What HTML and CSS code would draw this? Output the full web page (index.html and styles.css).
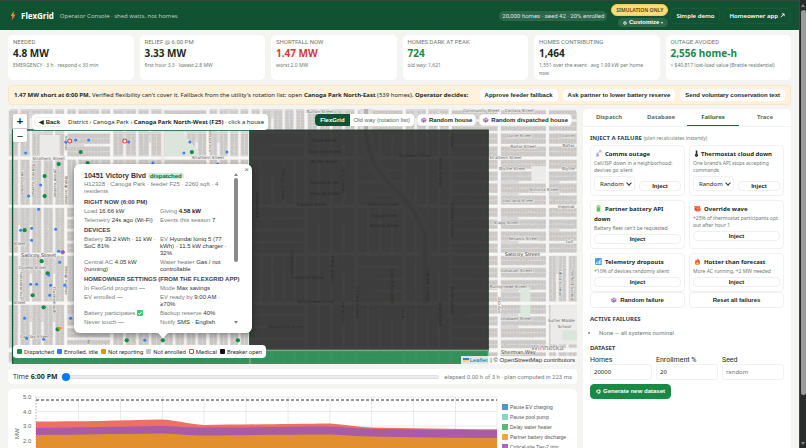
FILE: index.html
```html
<!DOCTYPE html>
<html lang="en">
<head>
<meta charset="utf-8">
<meta name="viewport" content="width=device-width, initial-scale=1">
<title>FlexGrid – Operator Console</title>
<link rel="stylesheet" href="styles.css">
</head>
<body>
<svg class="sprite" aria-hidden="true">
  <symbol id="i-die" viewBox="0 0 12 12"><path d="M6 .8 11 3.3v5.4L6 11.3 1 8.7V3.3z" fill="#b79ac8"/><path d="M1 3.3 6 5.8v5.5L1 8.7z" fill="#8e6ba6"/><path d="M6 .8 11 3.3 6 5.8 1 3.3z" fill="#d9c8e2"/><circle cx="6" cy="3.2" r="1" fill="#553a6c"/><circle cx="3" cy="7" r=".9" fill="#fff"/><circle cx="8.500" cy="7.300" r="1" fill="#553a6c"/></symbol>
  <symbol id="i-ext" viewBox="0 0 10 10"><path d="M1.500 8.500 8 2M3.500 1.700H8.300V6.500" fill="none" stroke="currentColor" stroke-width="1.700"/></symbol>
</svg>
<div class="shell">
<div class="page">
  <header class="top">
    <svg class="bolt" viewBox="0 0 10 16" aria-hidden="true"><path d="M6.500 0 1 8.500h3.200L2.800 16 9.300 6.500H5.800z" fill="#f7a531"/><path d="M4.200 8.500 2.800 16 9.300 6.500z" fill="#f0643c"/></svg>
    <h1>FlexGrid</h1>
    <span class="tagline">Operator Console · shed watts, not homes</span>
    <span class="pill">20,000 homes · seed 42 · 20% enrolled</span>
    <div class="stack">
      <span class="sim">SIMULATION ONLY</span>
      <button class="custom"><svg viewBox="0 0 10 10"><circle cx="5" cy="5" r="3" fill="none" stroke="currentColor" stroke-width="2"/><circle cx="5" cy="5" r="4.300" fill="none" stroke="currentColor" stroke-width="1.200" stroke-dasharray="1.700 1.700"/></svg> Customize <i class="caret"></i></button>
    </div>
    <a class="nav" href="#demo">Simple demo</a>
    <a class="nav" href="#home">Homeowner app <svg class="ext"><use href="#i-ext"/></svg></a>
  </header>

  <main class="content">
    <section class="kpis">
      <div class="kpi"><h2>NEEDED</h2><b>4.8 MW</b><p>EMERGENCY · 3 h · respond ≤ 30 min</p></div>
      <div class="kpi"><h2>RELIEF @ 6:00 PM</h2><b>3.33 MW</b><p>first hour 3.3 · lowest 2.8 MW</p></div>
      <div class="kpi"><h2>SHORTFALL NOW</h2><b class="bad">1.47 MW</b><p>worst 2.0 MW</p></div>
      <div class="kpi"><h2>HOMES DARK AT PEAK</h2><b class="good">724</b><p>old way: 1,621</p></div>
      <div class="kpi"><h2>HOMES CONTRIBUTING</h2><b>1,464</b><p>1,551 over the event · avg 1.99 kW per home<br>now</p></div>
      <div class="kpi"><h2>OUTAGE AVOIDED</h2><b class="good">2,556 home-h</b><p>≈ $40,817 lost-load value (Brattle residential)</p></div>
    </section>

    <section class="alert">
      <p><b>1.47 MW short at 6:00 PM.</b> Verified flexibility can't cover it. Fallback from the utility's rotation list: open <b>Canoga Park North-East</b> (539 homes). <b>Operator decides:</b></p>
      <button>Approve feeder fallback</button>
      <button>Ask partner to lower battery reserve</button>
      <button>Send voluntary conservation text</button>
    </section>

    <div class="columns">
      <div class="left">
        <section class="map">
          <svg id="tiles" class="tiles" viewBox="8 109 569 255" preserveAspectRatio="xMidYMid slice" role="img" aria-label="Feeder map"></svg>
          <div class="zoomer"><button>+</button><button>−</button></div>
          <div class="crumbs"><button>◀ Back</button><span>District › Canoga Park › <b>Canoga Park North-West (F25)</b> · click a house</span></div>
          <div class="modes">
            <div class="seg"><button class="on">FlexGrid</button><button>Old way (rotation list)</button></div>
            <button class="rand"><svg><use href="#i-die"/></svg>Random house</button>
            <button class="rand"><svg><use href="#i-die"/></svg>Random dispatched house</button>
          </div>
          <div class="key">
            <span><i class="k1"></i>Dispatched</span><span><i class="k2"></i>Enrolled, idle</span><span><i class="k3"></i>Not reporting</span><span><i class="k4"></i>Not enrolled</span><span><i class="k5"></i>Medical</span><span><i class="k6"></i>Breaker open</span>
          </div>
          <div class="attrib"><i class="flag"></i><a href="#leaflet">Leaflet</a> | © OpenStreetMap contributors</div>
          <article class="popup">
            <button class="close" aria-label="Close">×</button>
            <div class="info">
              <h3>10451 Victory Blvd <span class="tag">dispatched</span></h3>
              <p class="meta">H12328 · Canoga Park · feeder F25 · 2260 sqft · 4 residents</p>
              <h4>RIGHT NOW (6:00 PM)</h4>
              <div class="facts"><p>Load <em>16.66 kW</em></p><p>Giving <b>4.58 kW</b></p><p>Telemetry <em>24s ago (Wi-Fi)</em></p><p>Events this season <em>7</em></p></div>
              <h4>DEVICES</h4>
              <div class="facts"><p>Battery <em>39.2 kWh · 11 kW · SoC 81%</em></p><p>EV <em>Hyundai Ioniq 5 (77 kWh) · 11.5 kW charger · 32%</em></p><p>Central AC <em>4.05 kW (running)</em></p><p>Water heater <em>Gas / not controllable</em></p></div>
              <h4>HOMEOWNER SETTINGS (FROM THE FLEXGRID APP)</h4>
              <div class="facts"><p>In FlexGrid program <em>—</em></p><p>Mode <em>Max savings</em></p><p>EV enrolled <em>—</em></p><p>EV ready by <em>9:00 AM · ≥70%</em></p><p>Battery participates <svg class="tick" viewBox="0 0 10 10"><rect width="10" height="10" rx="1.500" fill="#3fc46b"/><path d="M2 5.300 4.200 7.500 8 2.700" fill="none" stroke="#fff" stroke-width="1.600"/></svg></p><p>Backup reserve <em>40%</em></p><p>Never touch <em>—</em></p><p>Notify <em>SMS · English</em></p></div>
            </div>
            <div class="rail"><i class="up"></i><i class="thumb"></i><i class="down"></i></div>
          </article>
        </section>

        <section class="time">
          <label for="t">Time <b>6:00 PM</b></label>
          <input id="t" type="range" min="0" max="180" value="0">
          <span>elapsed 0.00 h of 3 h · plan computed in 223 ms</span>
        </section>

        <section class="chart">
          <svg viewBox="8 389 490 100" role="img" aria-label="Relief by source in megawatts">
            <g stroke="#e4e4e4" stroke-width=".8"><path d="M36 397H497M36 411.500H497M36 426H497M36 441H497M78.500 397V489M120.500 397V489M162.500 397V489M204 397V489M246 397V489M288 397V489M330 397V489M371.500 397V489M413.500 397V489M455.500 397V489M497 397V489"/></g>
            <path d="M36 397V489" stroke="#999" stroke-dasharray="1.500 1.500" stroke-width=".8"/>
            <path d="M36 421.500C80 421.500 120 420.500 162 419.500C175 420 188 424 204 425C240 424.500 290 424 330 423.500C345 424.500 358 427 371 427.500C410 428 450 429 497 429.300V489H36z" fill="#ec7063"/>
            <path d="M36 428C80 427.500 120 426.500 162 426C178 426.500 190 427.500 204 427.500C250 427.500 290 426.500 330 426.500C345 427 358 429 371 428.800C410 429.500 450 430 497 430.300V489H36z" fill="#a95ba6"/>
            <path d="M36 435C80 434.500 120 434 162 433.500C178 434 190 435.500 204 435.500C250 435 290 434.500 330 434.500C345 435 358 436.500 371 436.500C410 437 450 438 497 438V489H36z" fill="#e2902f"/>
            <path d="M36 400H497" stroke="#333" stroke-width="1.200" stroke-dasharray="3 2"/>
            <g class="axis"><text x="23" y="399">5.0</text><text x="23" y="414">4.0</text><text x="23" y="428">3.0</text><text x="23" y="443">2.0</text><text transform="translate(18.500 439) rotate(-90)">MW</text></g>
          </svg>
          <ul>
            <li><i class="c1"></i>Pause EV charging</li><li><i class="c2"></i>Pause pool pump</li><li><i class="c3"></i>Delay water heater</li><li><i class="c4"></i>Partner battery discharge</li><li><i class="c5"></i>Critical-site Tier-2 trim</li>
          </ul>
        </section>
      </div>

      <aside class="panel">
        <nav class="tabs"><button>Dispatch</button><button>Database</button><button class="on">Failures</button><button>Trace</button></nav>
        <div class="body">
          <h2>INJECT A FAILURE <small>(plan recalculates instantly)</small></h2>
          <div class="grid">
            <div class="fail"><h3><svg viewBox="0 0 14 14"><path d="M1 13 5 6l3 7z" fill="#d8a6b8"/><path d="M3 8a4.500 4.500 0 0 0 6 3.500L4 4z" fill="#9aa7e0"/><path d="M6 7 11 1.500M8 1.500h4V5" fill="none" stroke="#7b90dd" stroke-width="1.400"/></svg>Comms outage</h3><p>Cell/ISP down in a neighborhood: devices go silent</p>
              <div class="act"><span class="sel"><select aria-label="Neighborhood"><option>Random</option></select></span><button>Inject</button></div></div>
            <div class="fail"><h3><svg class="slim" viewBox="0 0 8 14"><path d="M2.500 1h3v7a3 3 0 1 1-3 0z" fill="#222"/><circle cx="4" cy="10.500" r="1.500" fill="#666"/></svg>Thermostat cloud down</h3><p>One brand's API stops accepting commands</p>
              <div class="act"><span class="sel"><select aria-label="Brand"><option>Random</option></select></span><button>Inject</button></div></div>
            <div class="fail"><h3><svg viewBox="0 0 14 14"><rect x="5" y="0" width="4" height="2" fill="#9ab59c"/><rect x="3" y="1.500" width="8" height="12" rx="1.200" fill="#a9dd9a"/><rect x="4" y="5" width="6" height="7.500" fill="#5cc45a"/></svg>Partner battery API down</h3><p>Battery fleet can't be requested</p><button>Inject</button></div>
            <div class="fail"><h3><svg viewBox="0 0 14 14"><path d="M1 2h4l2 1 5-1v3l1 1v5l-3 2H5L1 10z" fill="#e6483a"/><path d="M2 3.500h3v1.800H2zM7 3.500h4v1.500H7zM5 6.500h6v2H5zM6 10h4v1.500H6z" fill="#f9a94a"/></svg>Override wave</h3><p>+25% of thermostat participants opt out after hour 1</p><button>Inject</button></div>
            <div class="fail"><h3><svg viewBox="0 0 14 14"><rect width="14" height="14" rx="2" fill="#4e9fe8"/><path d="M2 9h2v3H2zM5 7h2v5H5zM8 5h2v7H8zM11 2.500h1.600V12H11z" fill="#dff0ff"/></svg>Telemetry dropouts</h3><p>+10% of devices randomly silent</p><button>Inject</button></div>
            <div class="fail"><h3><svg viewBox="0 0 14 14"><path d="M7 0c1 3 5 4 5 8.500A5 5 0 0 1 7 14a5 5 0 0 1-5-5.500C2 6 3.500 5 4 3c1 .6 1.500 1.500 1.700 2.300C6.800 4 7.200 2 7 0z" fill="#ee5a2e"/><path d="M7 6.500c.6 2 2.600 2.500 2.600 4.500A2.600 2.600 0 0 1 7 13.500 2.600 2.600 0 0 1 4.400 11C4.400 9.500 6.500 8.500 7 6.500z" fill="#fcc640"/></svg>Hotter than forecast</h3><p>More AC running, +2 MW needed</p><button>Inject</button></div>
          </div>
          <div class="pair"><button><svg><use href="#i-die"/></svg>Random failure</button><button>Reset all failures</button></div>
          <h2 class="gap">ACTIVE FAILURES</h2>
          <ul><li>None — all systems nominal</li></ul>
          <h2 class="data">DATASET</h2>
          <div class="fields">
            <label>Homes<input value="20000"></label>
            <label>Enrollment %<input value="20"></label>
            <label>Seed<input placeholder="random"></label>
          </div>
          <button class="go"><svg viewBox="0 0 10 10"><circle cx="5" cy="5" r="3.200" fill="none" stroke="#fff" stroke-width="2.400" stroke-dasharray="5.700 1"/></svg>Generate new dataset</button>
        </div>
      </aside>
    </div>
  </main>
</div>
<div class="scroll" aria-hidden="true"><i class="up"></i><i class="thumb"></i><i class="down"></i></div>
</div>
<script src="map.js"></script>
</body>
</html>
```
FILE: styles.css
```css
* { box-sizing: border-box; margin: 0; padding: 0; }
html, body { height: 100%; }
body { overflow: hidden; background: #f4f4f2; color: #1c2a24; font: 6px/8px "Noto Sans", sans-serif; }
button, input, select { font: inherit; color: inherit; }
button { border: 1px solid #eeefee; border-radius: 4px; background: #fff; font: bold 6px/8px "Liberation Sans", sans-serif; white-space: nowrap; }
i, em { font-style: normal; }
a { color: inherit; text-decoration: none; }
ul { list-style: none; }
.sprite { position: absolute; width: 0; height: 0; }

.shell { display: flex; height: 100%; }
.page { flex: 1; min-width: 0; overflow: hidden; }
.scroll { display: flex; flex-direction: column; align-items: center; width: 7px; background: #292a2b; border-left: 1px solid #444; padding: 3px 0; }
.scroll .thumb { flex: 0 0 87%; width: 5px; margin-top: 3px; border-radius: 3px; background: #9b9b9b; align-self: flex-end; }
.up, .down { width: 0; height: 0; border: 2px solid transparent; }
.up { border-bottom: 3px solid #888; border-top: 0; }
.down { border-top: 3px solid #888; border-bottom: 0; margin-top: auto; }
.scroll .up { margin-top: 1px; }

.top { display: flex; align-items: center; height: 30px; padding: 0 8px 0 10px; background: #115232; border-top: 1px solid #36453d; color: #fff; }
.bolt { width: 6px; height: 9px; margin-right: 5px; }
.top h1 { font-size: 8px; line-height: 10px; margin-right: 6px; }
.tagline { font-family: "Open Sans", "Noto Sans", sans-serif; font-size: 6px; color: #c3d5cb; }
.pill { margin-left: auto; padding: 1px 3px; border-radius: 6px; background: #2d6649; color: #dce8e1; font-family: Roboto, sans-serif; }
.stack { display: flex; flex-direction: column; align-items: flex-end; gap: 2px; margin: 0 2px 0 4px; }
.sim { padding: 1px 4px; border: 1px solid #f3cb5a; border-radius: 6px; background: #fbdc7c; color: #6b5312; font-weight: bold; font-size: 5px; }
.custom { display: flex; align-items: center; gap: 2px; padding: 0 4px; border: 1px solid #2d6649; border-radius: 6px; background: #2d6649; color: #fff; font-size: 6px; line-height: 7px; }
.custom svg { width: 4px; height: 4px; }
.caret { border: 1px solid transparent; border-top: 2px solid #fff; border-bottom: 0; }
.nav { display: flex; align-items: center; gap: 2px; padding: 3px 5px; border: 1px solid #185a39; border-radius: 4px; font-weight: 600; line-height: 8px; }
.nav + .nav { margin-left: 3px; }
.ext { width: 5px; height: 5px; }

.content { padding: 5px 8px 0; }
.kpis { display: grid; grid-template-columns: repeat(6, 1fr); gap: 6px; }
.kpi { min-height: 45px; padding: 4px 3px 3px 5px; border-radius: 5px; background: #fff; }
.kpi h2 { font-family: Roboto, sans-serif; font-size: 6px; line-height: 6px; font-weight: 400; color: #6b7771; }
.kpi b { display: block; font-size: 10px; line-height: 16px; }
.kpi p { font-size: 5px; line-height: 8px; color: #6d7973; }
.bad { color: #d63939; }
.good { color: #1a8a4a; }

.alert { display: flex; align-items: center; gap: 5px; margin: 5px 0 4px; padding: 3px 5px; border: 1px solid #f9e6c4; border-radius: 4px; background: #fef2dc; }
.alert p { white-space: nowrap; margin-right: auto; }
.alert button { padding: 0 4px; line-height: 10px; border-color: #fff; }

.columns { display: grid; grid-template-columns: minmax(0, 569fr) minmax(0, 208fr); gap: 6px; }
.left { display: flex; flex-direction: column; gap: 5px; min-width: 0; }
.map { position: relative; height: 57vh; border-radius: 5px; overflow: hidden; background: #e4e2e1; }
.tiles { display: block; width: 100%; height: 100%; }
.tiles text { font: 4px "DejaVu Sans", sans-serif; fill: #666; text-anchor: middle; stroke: #f0efee; stroke-width: 1px; paint-order: stroke; }
.tiles .dim text { stroke: none; fill: #2a2a2a; }
.tiles text.big { font-size: 5px; fill: #444; }
.tiles text.town { font-size: 7px; fill: #888; }
.zoomer { position: absolute; left: 5px; top: 5px; border-radius: 2px; background: #fff; overflow: hidden; display: grid; box-shadow: 0 0 1px #777; }
.zoomer button { width: 14px; height: 14px; border: 0; border-radius: 0; font: bold 11px/14px "Liberation Sans", sans-serif; }
.zoomer button + button { border-top: 1px solid #ccc; font-weight: normal; }
.crumbs { position: absolute; left: 24px; top: 5px; display: flex; align-items: center; gap: 3px; padding: 3px 4px 3px 2px; border-radius: 4px; background: #fff; white-space: nowrap; }
.crumbs button { padding: 0 4px; }
.modes { position: absolute; right: 5px; top: 5px; display: flex; gap: 3px; }
.seg { display: flex; border-radius: 4px; overflow: hidden; background: #fff; }
.seg button { border: 0; border-radius: 0; padding: 0 4px; line-height: 12px; font-weight: 400; color: #555f5a; }
.seg .on { padding: 0 5px; background: #115232; color: #fff; font-weight: bold; }
.rand { display: flex; align-items: center; gap: 2px; padding: 0 3px; line-height: 10px; }
.rand svg, .pair svg { width: 6px; height: 6px; }
.key { position: absolute; left: 5px; bottom: 6px; display: flex; gap: 3px; padding: 3px 4px; border-radius: 4px; background: #fff; font-family: Roboto, sans-serif; line-height: 7px; white-space: nowrap; color: #333; }
.key span { display: flex; align-items: center; gap: 2px; }
.key i { width: 5px; height: 5px; border-radius: 1px; }
.k1 { background: #178a46; } .k2 { background: #3478e5; } .k3 { background: #e0940f; } .k4 { background: #bcc3c0; } .k5 { border: 1px solid #dc3d3d; } .k6 { background: #111; }
.attrib { position: absolute; right: 0; bottom: 0; display: flex; align-items: center; gap: 1px; padding: 0 2px; background: #ffffffd0; font: 6px/8px "Liberation Sans", sans-serif; color: #333; white-space: pre; }
.attrib a { color: #0078a8; }
.flag { width: 6px; height: 4px; background: linear-gradient(#3a78dc 50%, #fddc3a 50%); }

.popup { position: absolute; left: 66px; top: 55px; width: 178px; display: flex; gap: 1px; padding: 7px 14px 6px 10px; border-radius: 6px; background: #fff; box-shadow: 0 2px 7px #0006; font: 6px/8px "Liberation Sans", sans-serif; color: #333; }
.popup::after { content: ""; position: absolute; left: 84px; top: 100%; border: 5px solid transparent; border-top-color: #fff; border-bottom: 0; }
.close { position: absolute; right: 3px; top: 2px; border: 0; background: none; font: 8px/8px "Liberation Sans", sans-serif; color: #777; }
.info { flex: 1; min-width: 0; }
.popup h3 { font-size: 7px; line-height: 9px; }
.tag { padding: 0 2px; border-radius: 4px; background: #c9edd6; color: #16663a; font-size: 6px; }
.meta { color: #74807a; line-height: 7px; padding-right: 8px; margin-bottom: 3px; }
.popup h4 { margin: 1px 0; font-size: 6px; line-height: 9px; color: #3c4156; white-space: nowrap; }
.facts { display: grid; grid-template-columns: 1fr 1fr; gap: 2px 4px; line-height: 7px; color: #74807a; padding-bottom: 1px; }
.facts em { color: #333; } .facts b { color: #222; }
.tick { width: 6px; height: 6px; vertical-align: middle; }
.rail { display: flex; flex-direction: column; align-items: center; width: 5px; padding: 2px 0 3px; }
.rail .thumb { width: 4px; height: 84px; margin-top: 2px; border-radius: 2px; background: #8b8b8b; }

.time { display: flex; align-items: center; gap: 5px; padding: 0 5px; border-radius: 4px; background: #fff; line-height: 15px; white-space: nowrap; }
.time label { font: 7px/15px "Open Sans", "Noto Sans", sans-serif; }
.time span { font-family: Roboto, sans-serif; color: #75817b; }
.time input { flex: 1; min-width: 0; height: 8px; margin-left: -2px; appearance: none; background: none; }
.time input::-webkit-slider-runnable-track { height: 4px; border: 1px solid #dedede; border-radius: 2px; background: #ececec; }
.time input::-webkit-slider-thumb { appearance: none; width: 8px; height: 8px; margin-top: -3px; border-radius: 50%; background: #0a78f5; }
.chart { display: flex; border-radius: 5px; background: #fff; }
.chart svg { flex: 490 0 0; min-width: 0; }
.axis text { font: 6px "Liberation Sans", sans-serif; fill: #666; }
.chart ul { flex: 75 0 0; padding: 13px 0 0 4px; min-width: 0; }
.chart li { display: flex; align-items: center; gap: 2px; font: 5px/10px "Liberation Sans", sans-serif; color: #555; white-space: nowrap; }
.chart i { width: 6px; height: 6px; }
.c1 { background: #4a9ac9; } .c2 { background: #8fd3c4; } .c3 { background: #58b973; } .c4 { background: #f3a63a; } .c5 { background: #a868c0; }

.panel { border-radius: 5px; background: #fff; min-width: 0; min-height: 76vh; }
.tabs { display: grid; grid-template-columns: repeat(4, 1fr); border-bottom: 1px solid #f0f1f0; }
.tabs button { border: 0; border-bottom: 1px solid transparent; border-radius: 0; background: none; line-height: 16px; font-family: "Noto Sans", sans-serif; font-weight: bold; color: #5f6e66; }
.tabs .on { color: #15713d; border-color: #15713d; }
.body { padding: 7px; }
.body h2 { font-size: 6px; line-height: 8px; color: #3a4055; }
.body small { font: 5px/8px "Noto Sans", sans-serif; color: #75817b; }
.grid, .pair { display: grid; grid-template-columns: 1fr 1fr; gap: 4px; }
.grid { margin-top: 3px; row-gap: 4px; }
.fail { padding: 3px 3px 4px; border: 1px solid #f0f1f0; border-radius: 4px; min-width: 0; }
.fail h3 { font-size: 6px; line-height: 10px; }
.fail h3 svg { width: 7px; height: 7px; margin: 0 3px 0 1px; vertical-align: -1px; }
.fail h3 .slim { width: 5px; margin-right: 2px; }
.fail p { font-size: 5px; line-height: 7px; color: #6d7973; margin-top: 1px; }
.fail > button { display: block; width: 100%; margin-top: 2px; line-height: 8px; }
.act { display: flex; align-items: flex-end; gap: 4px; margin-top: 2px; }
.sel { position: relative; width: 41px; }
.sel::after { content: ""; position: absolute; right: 4px; top: 5px; width: 3px; height: 3px; border: solid #333; border-width: 0 1px 1px 0; transform: rotate(45deg); }
.sel select { display: block; width: 100%; height: 15px; padding: 0 10px 0 5px; appearance: none; border: 1px solid #f0f1f0; border-radius: 3px; background: #fff; font: 6px "Noto Sans", sans-serif; }
.act button { flex: 1; }
.pair button { display: flex; justify-content: center; align-items: center; gap: 3px; line-height: 14px; }
.body .gap { margin-top: 7px; }
.body ul { margin: 6px 0 7px; padding-left: 9px; font: 6px/8px Roboto, sans-serif; color: #75817b; list-style: disc; }
.fields { display: grid; grid-template-columns: repeat(3, 1fr); gap: 4px; margin-top: 4px; }
.fields label { min-width: 0; font: 7px/8px Roboto, sans-serif; }
.fields input { display: block; width: 100%; height: 16px; padding: 0 3px; border: 1px solid #f0f1f0; border-radius: 3px; font: 6px "Noto Sans", sans-serif; }
.go { display: flex; align-items: center; gap: 2px; margin-top: 4px; padding: 0 5px; border-color: #178a46; background: #178a46; color: #fff; line-height: 13px; }
.go svg { width: 5px; height: 5px; }
```
FILE: map.js
```js
// Draws the street base map, feeder areas and home markers.
const NS = "http://www.w3.org/2000/svg";
const root = document.getElementById("tiles");
let seed = 42;
const rnd = () => (seed = (seed * 16807) % 2147483647) / 2147483647;
function add(parent, tag, attrs, text) {
  const el = document.createElementNS(NS, tag);
  for (const k in attrs) el.setAttribute(k, attrs[k]);
  if (text) el.textContent = text;
  parent.appendChild(el);
  return el;
}

const base = add(root, "g", {});
add(base, "rect", { x: 8, y: 109, width: 569, height: 255, fill: "#dad8d7" });

// Rows of houses, back to back, between residential streets.
function block(x0, y0, x1, y1, vertical) {
  let d = "", roads = "";
  const along = vertical ? [y0, y1] : [x0, x1];
  const across = vertical ? [x0, x1] : [y0, y1];
  const n = Math.max(1, Math.round((across[1] - across[0]) / 12));
  const step = (across[1] - across[0]) / n;
  for (let k = 0; k < n; k++) {
    const a = across[0] + k * step;
    const cut = k && rnd() < 0.4 ? (along[1] - along[0]) * 0.4 : 0;
    roads += vertical ? `M${a} ${y0 + cut}V${y1}` : `M${x0 + cut} ${a}H${x1}`;
    for (const off of [1.8, step / 2 + 0.4]) {
      for (let p = along[0] + 2; p < along[1] - 3; p += 3) {
        const w = step / 2 - 2.1 - rnd() * 0.7;
        const b = a + off + rnd() * 0.4;
        d += vertical ? `M${b} ${p}h${w}v2.6h${-w}z` : `M${p} ${b}h2.6v${w}h-2.6z`;
      }
    }
  }
  add(base, "path", { d: roads, stroke: "#f3f2f1", "stroke-width": 2.2, fill: "none" });
  add(base, "path", { d, fill: "#cac7c5" });
}
const xs = [8, 66, 112, 163, 208, 250, 306, 356, 404, 450, 499, 547, 577];
const ys = [109, 132, 158, 206, 254, 303, 350, 364];
for (let i = 0; i < xs.length - 1; i++)
  for (let j = 0; j < ys.length - 1; j++) {
    const vertical = i < 9 ? (i * 3 + j * 2) % 4 !== 1 : j > 3 && i > 10;
    block(xs[i], ys[j], xs[i + 1], ys[j + 1], vertical);
  }
// Parks and open ground
add(base, "path", { d: "M165 132h18l16 20v6h-34z", fill: "#dce5dc" });
add(base, "rect", { x: 40, y: 135, width: 20, height: 22, fill: "#eceae8" });
add(base, "rect", { x: 520, y: 287, width: 10, height: 30, fill: "#dce8dd" });
add(base, "rect", { x: 550, y: 302, width: 27, height: 42, fill: "#ecebe9" });
add(base, "rect", { x: 562, y: 330, width: 15, height: 10, fill: "#dbe5d9" });
add(base, "rect", { x: 531, y: 166, width: 15, height: 15, fill: "#ecebe9" });
for (const y of ys.slice(2)) add(base, "path", { d: `M8 ${y}H577`, stroke: "#f7f7f5", "stroke-width": y === 350 ? 4 : 3 });
for (const x of xs.slice(1, -1)) add(base, "path", { d: `M${x} 109V364`, stroke: x === 163 ? "#efe9e2" : "#f6f6f4", "stroke-width": 3 });
add(base, "path", { d: "M366 109V132C368 165 384 178 400 194S420 225 425 235V303", fill: "none", stroke: "#dedddb", "stroke-width": 13 });
add(base, "path", { d: "M366 109V132C368 165 384 178 400 194S420 225 425 235V303", fill: "none", stroke: "#b5b3b1", "stroke-width": 4 });

function label(g, x, y, t, rot, cls) {
  add(g, "text", { transform: `translate(${x} ${y}) rotate(${rot || 0})`, class: cls || "" }, t);
}
label(base, 49, 160, "Strathern Street");
label(base, 208, 159, "Strathern Street");
label(base, 39, 257, "Saticoy Street", 0, "big");
label(base, 33, 269, "Covello Street");
label(base, 20, 245, "Street");
label(base, 20, 304, "Street");
label(base, 35, 338, "Cantlay Street");
label(base, 89, 344, "P", 0, "big");
[[21, 182, "Lena Avenue"], [32, 180, "Remmet Avenue"], [54, 183, "Jordan Avenue"], [65, 190, "Shoup Avenue"],
 [20, 285, "Farralone Ave"], [53, 300, "Owensmouth"], [65, 280, "Shoup Avenue"], [65, 143, "Avenue"], [209, 141, "Vassar Ave"]]
  .forEach(a => label(base, a[0], a[1], a[2], 90));
[[320, 113, "Burton Street"], [481, 112, "Community Street"], [519, 112, "Cantara Street"], [519, 137, "Lorne Street"], [568, 137, "Lorne"], [523, 148, "Baltar Street"], [568, 147, "Baltar"],
 [505, 159, "Strathern Street"], [512, 170, "Blythe Street"], [568, 170, "Blythe"], [544, 191, "Arminta Street"], [518, 202, "Hartland Street"], [566, 208, "Ingomar"],
 [506, 224, "Stagg Street"], [523, 240, "Keswick Street"], [569, 243, "Lull"], [516, 272, "Cohasset Street"], [508, 288, "Runnymede Street"], [516, 320, "Leadwell Street"], [561, 322, "Sutter Middle"], [564, 328, "School"]]
  .forEach(a => label(base, a[0], a[1], a[2]));
label(base, 522, 256, "Saticoy Street", 0, "big");
label(base, 518, 354, "Sherman Way", 0, "big");
label(base, 547, 350, "Winnetka", 0, "town");
[[498, 305, "Oso Ave"], [559, 282, "Lubao Avenue"], [571, 285, "Penfield Avenue"]].forEach(a => label(base, a[0], a[1], a[2], 90));

// Feeder areas
add(root, "rect", { x: 250, y: 130, width: 238, height: 220, fill: "#2d2d2d", "fill-opacity": 0.9, stroke: "#24382e", "stroke-width": 1 });
add(root, "path", { d: "M13 357H250V350H488V364H13z", fill: "#24884f", "fill-opacity": 0.9 });
add(root, "path", { d: "M250 350H488V364M250 350V364", fill: "none", stroke: "#8fbda2", "stroke-width": 1 });
add(root, "path", { d: "M13 364V130H250V357", fill: "none", stroke: "#1a5537", "stroke-width": 1.4 });
const dim = add(root, "g", { class: "dim" });
[[324, 142, "Chase Street"], [325, 153, "Strathern Street"], [324, 163, "Blythe Street"], [325, 184, "Arminta Street"], [325, 195, "Elkwood Street"], [312, 206, "Ingomar Street"], [383, 206, "Hartland Street"], [384, 217, "Stagg Street"], [384, 227, "Keswick Street"],
 [308, 279, "Cohasset Street"], [316, 303, "Runnymede Street"], [286, 328, "Wyandotte Street"], [415, 157, "Strathern Street"]]
  .forEach(a => label(dim, a[0], a[1], a[2]));
label(dim, 382, 256, "Saticoy Street", 0, "big");
[[282, 184, "Canoga Avenue"], [342, 180, "Variel Avenue"], [451, 140, "Avenue"], [439, 172, "Mason Avenue"], [256, 205, "Owensmouth"], [451, 220, "Winnetka Avenue"], [451, 300, "Mason Avenue"], [356, 302, "De Soto Avenue"], [342, 312, "Lurline Ave"], [391, 286, "Cozycroft Avenue"], [402, 312, "Kelvin"], [427, 284, "Fallbrook Avenue"], [439, 314, "Quakertown"], [331, 270, "Independence"], [291, 262, "Deering Ave"]]
  .forEach(a => label(dim, a[0], a[1], a[2], 90));

// Homes
const dots = (list, fill, r) => list.forEach(([x, y]) => add(root, "circle", { cx: x, cy: y, r, fill }));
dots([[26, 153], [66, 142], [129, 142], [76, 140], [190, 142], [184, 153], [227, 152], [153, 163], [218, 164], [41, 185], [29, 196], [39, 209], [21, 230], [32, 228], [56, 229],
  [32, 240], [59, 251], [60, 262], [31, 284], [37, 284], [51, 285], [65, 285], [50, 295], [25, 318], [71, 318], [27, 338], [44, 339], [145, 340], [89, 140]], "#3c83ee", 1.5);
dots([[192, 152], [81, 152], [59, 164], [88, 163], [45, 176], [45, 196], [25, 230], [42, 261], [48, 273], [33, 295], [44, 307], [58, 329], [127, 340], [163, 340], [238, 340]], "#178a46", 2.1);
dots([[49, 275]], "#3c83ee", 1.4);
dots([[60, 328]], "#e0940f", 1.6);
for (const [x, y] of [[70, 141], [125, 141]]) add(root, "circle", { cx: x, cy: y, r: 2, fill: "#fff5", stroke: "#dc4b45", "stroke-width": 1 });
add(root, "circle", { cx: 63, cy: 252, r: 1.8, fill: "#3c83ee", stroke: "#dc4b45", "stroke-width": 0.8 });
```
